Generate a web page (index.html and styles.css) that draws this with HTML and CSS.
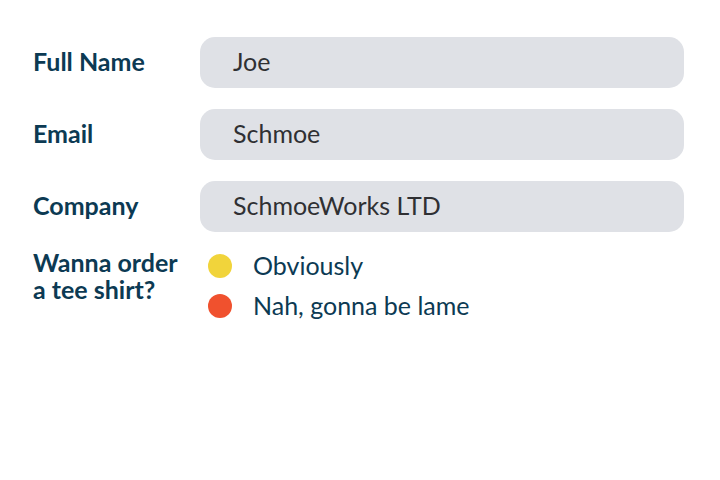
FILE: index.html
```html
<!DOCTYPE html>
<html>
<head>
<meta charset="utf-8">
<link rel="stylesheet" href="styles.css">
</head>
<body>
<form class="form">
  <div class="row">
    <label class="label">Full Name</label>
    <div class="input">Joe</div>
  </div>
  <div class="row">
    <label class="label">Email</label>
    <div class="input">Schmoe</div>
  </div>
  <div class="row">
    <label class="label">Company</label>
    <div class="input">SchmoeWorks LTD</div>
  </div>
  <div class="row row-top">
    <label class="label label-multi">Wanna order<br>a tee shirt?</label>
    <div class="options">
      <div class="option"><span class="dot dot-yes"></span><span class="opt-text">Obviously</span></div>
      <div class="option"><span class="dot dot-no"></span><span class="opt-text">Nah, gonna be lame</span></div>
    </div>
  </div>
</form>
</body>
</html>
```
FILE: styles.css
```css
html, body {
  margin: 0;
  padding: 0;
  background: #ffffff;
}
body {
  font-family: Lato, "Noto Sans", sans-serif;
}
.form {
  display: flex;
  flex-direction: column;
  gap: 21px;
  padding: 37px 36px 0 33px;
}
.row {
  display: flex;
  align-items: center;
}
.row-top {
  align-items: flex-start;
}
.label {
  width: 167px;
  flex: none;
  font-weight: 700;
  font-size: 25px;
  color: #0c3a53;
  padding-bottom: 4px;
}
.label-multi {
  line-height: 27px;
  margin-top: -4px;
  padding-bottom: 0;
}
.input {
  flex: 1;
  height: 51px;
  box-sizing: border-box;
  background: #dfe1e6;
  border-radius: 15px;
  padding-left: 33px;
  padding-bottom: 4px;
  display: flex;
  align-items: center;
  font-size: 25px;
  color: #2f3033;
}
.options {
  display: flex;
  flex-direction: column;
  gap: 10px;
  padding-left: 8px;
  margin-top: -2px;
}
.option {
  display: flex;
  align-items: center;
  height: 30px;
}
.dot {
  width: 24px;
  height: 24px;
  border-radius: 50%;
  flex: none;
  margin-right: 21px;
}
.dot-yes { background: #f1d43b; }
.dot-no { background: #f0512e; }
.opt-text {
  font-size: 25px;
  color: #0c3a53;
  padding-bottom: 2px;
}
```
